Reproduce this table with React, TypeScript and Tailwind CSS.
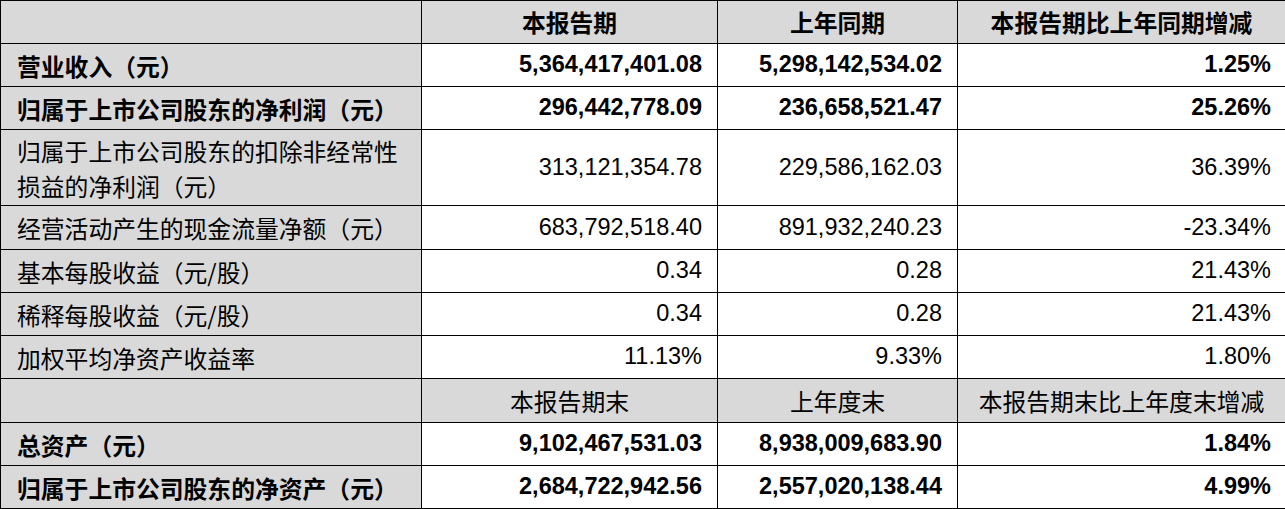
import React from "react";

type Row = {
  label: string[];
  vals: string[];
  bold: boolean;
};

const rows: Row[] = [
  { label: ["营业收入（元）"], vals: ["5,364,417,401.08", "5,298,142,534.02", "1.25%"], bold: true },
  { label: ["归属于上市公司股东的净利润（元）"], vals: ["296,442,778.09", "236,658,521.47", "25.26%"], bold: true },
  { label: ["归属于上市公司股东的扣除非经常性", "损益的净利润（元）"], vals: ["313,121,354.78", "229,586,162.03", "36.39%"], bold: false },
  { label: ["经营活动产生的现金流量净额（元）"], vals: ["683,792,518.40", "891,932,240.23", "-23.34%"], bold: false },
  { label: ["基本每股收益（元/股）"], vals: ["0.34", "0.28", "21.43%"], bold: false },
  { label: ["稀释每股收益（元/股）"], vals: ["0.34", "0.28", "21.43%"], bold: false },
  { label: ["加权平均净资产收益率"], vals: ["11.13%", "9.33%", "1.80%"], bold: false },
];

const rows2: Row[] = [
  { label: ["总资产（元）"], vals: ["9,102,467,531.03", "8,938,009,683.90", "1.84%"], bold: true },
  { label: ["归属于上市公司股东的净资产（元）"], vals: ["2,684,722,942.56", "2,557,020,138.44", "4.99%"], bold: true },
];

const cjk = "font-['Noto_Sans_CJK_SC',sans-serif]";
const num = "font-['Liberation_Sans','Noto_Sans_CJK_SC',sans-serif]";

function Label({ r }: { r: Row }) {
  return (
    <div
      className={`bg-[#d9d9d9] flex items-center pl-[16px] text-[23.8px] leading-[35px] text-black ${cjk} ${
        r.bold ? "font-bold" : "font-normal"
      }`}
    >
      <p className="whitespace-nowrap">
        {r.label.map((l, i) => (
          <React.Fragment key={l}>
            {i > 0 && <br />}
            {l}
          </React.Fragment>
        ))}
      </p>
    </div>
  );
}

function Val({ v, bold, pr }: { v: string; bold: boolean; pr: string }) {
  return (
    <div
      className={`bg-white flex items-center justify-end ${pr} text-[23.5px] text-black ${num} ${
        bold ? "font-bold" : "font-normal"
      }`}
    >
      {v}
    </div>
  );
}

function Head({ t, bold, gray = true }: { t: string; bold: boolean; gray?: boolean }) {
  return (
    <div
      className={`${gray ? "bg-[#d9d9d9]" : "bg-white"} flex items-center justify-center text-[23.8px] text-black ${cjk} ${
        bold ? "font-bold" : "font-normal"
      }`}
    >
      {t}
    </div>
  );
}

function DataRow({ r }: { r: Row }) {
  return (
    <>
      <Label r={r} />
      <Val v={r.vals[0]} bold={r.bold} pr="pr-[15px]" />
      <Val v={r.vals[1]} bold={r.bold} pr="pr-[15px]" />
      <Val v={r.vals[2]} bold={r.bold} pr="pr-[14px]" />
    </>
  );
}

export default function App() {
  return (
    <div className="w-[1285px] h-[509px] overflow-hidden bg-white">
      <div className="grid w-[1286px] grid-cols-[420px_295px_239px_327px] grid-rows-[42px_42px_42px_75px_43px_42px_42px_42px_43px_42px_42px] gap-[1px] p-[1px] bg-black">
        <div className="bg-[#d9d9d9]" />
        <Head t="本报告期" bold />
        <Head t="上年同期" bold />
        <Head t="本报告期比上年同期增减" bold />
        {rows.map((r) => (
          <DataRow key={r.label.join("")} r={r} />
        ))}
        <div className="bg-[#d9d9d9]" />
        <Head t="本报告期末" bold={false} />
        <Head t="上年度末" bold={false} />
        <Head t="本报告期末比上年度末增减" bold={false} />
        {rows2.map((r) => (
          <DataRow key={r.label.join("")} r={r} />
        ))}
      </div>
    </div>
  );
}
